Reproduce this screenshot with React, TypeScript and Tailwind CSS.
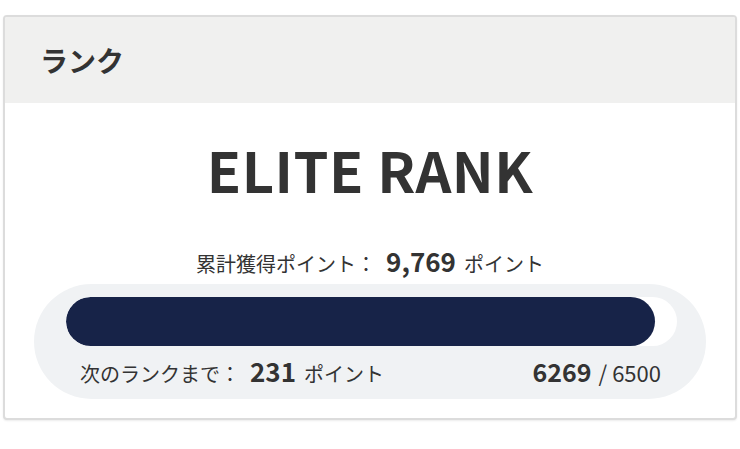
export default function App() {
  const current = 6269;
  const target = 6500;
  const pct = (current / target) * 100;

  return (
    <div className="min-h-screen bg-white pt-[15px] px-[3px] font-['Noto_Sans_CJK_JP','Noto_Sans',sans-serif] text-[#333]">
      <div className="rounded-[4px] border-2 border-[#dcdcdc] bg-white shadow-[0_1px_2px_rgba(0,0,0,0.08)] overflow-hidden">
        <div className="h-[86px] bg-[#f0f0ef] flex items-center px-[35px]">
          <h2 className="text-[28px] font-bold leading-none">ランク</h2>
        </div>

        <div className="px-[29px] pb-[19px]">
          <div className="text-center text-[56px] font-bold leading-none pt-[38px] tracking-[0.5px]">
            ELITE RANK
          </div>

          <div className="mt-[51px] text-center text-[20px] leading-none flex items-baseline justify-center">
            <span>累計獲得ポイント：</span>
            <span className="ml-[10px] text-[26px] font-bold">9,769</span>
            <span className="ml-[8px]">ポイント</span>
          </div>

          <div className="mt-[10px] rounded-full bg-[#f0f2f4] pl-[32px] pr-[29px] pt-[13px] pb-[15px]">
            <div className="h-[49px] rounded-full bg-white overflow-hidden">
              <div className="h-full rounded-full bg-[#172348]" style={{ width: `${pct}%` }} />
            </div>
            <div className="mt-[12px] flex items-baseline justify-between pl-[14px] pr-[16px] leading-none">
              <div className="flex items-baseline text-[20px]">
                <span>次のランクまで：</span>
                <span className="ml-[10px] text-[26px] font-bold">231</span>
                <span className="ml-[8px]">ポイント</span>
              </div>
              <div className="flex items-baseline text-[22px]">
                <span className="text-[25px] font-bold">{current}</span>
                <span className="ml-[7px]">/ {target}</span>
              </div>
            </div>
          </div>
        </div>
      </div>
    </div>
  );
}
